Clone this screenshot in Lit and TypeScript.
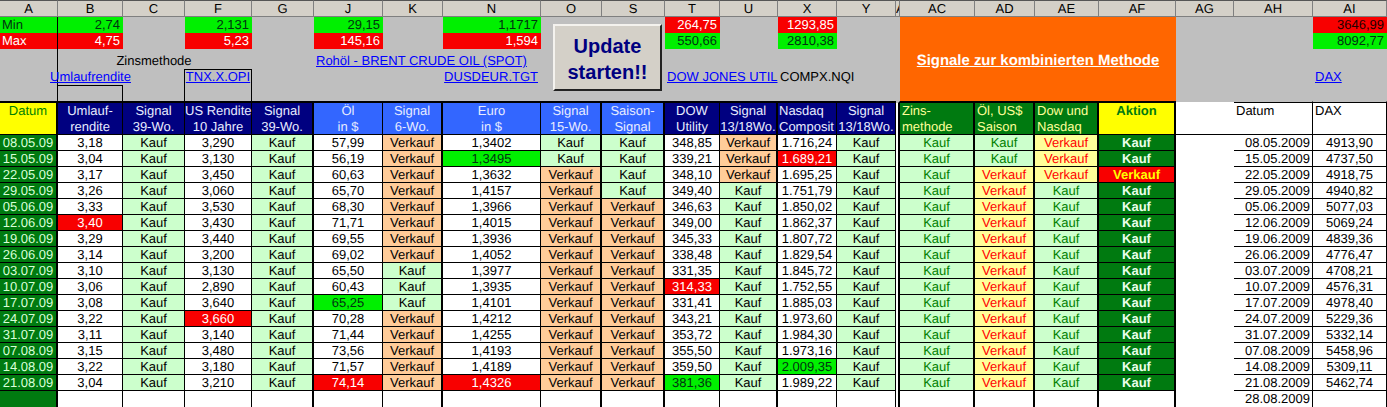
import { LitElement, html, css } from "lit";
import { customElement } from "lit/decorators.js";

const COLS: [string, number, boolean][] = [
  ["A", 58, true], ["B", 65, false], ["C", 62, false], ["F", 67, false], ["G", 62, true],
  ["J", 69, false], ["K", 60, true], ["N", 98, false], ["O", 61, true], ["S", 63, true],
  ["T", 55, false], ["U", 58, true], ["X", 59, false], ["Y", 59, false], ["A", 4, true],
  ["AC", 75, true], ["AD", 60, true], ["AE", 64, true], ["AF", 77, true], ["AG", 58, false],
  ["AH", 79, false], ["AI", 74, false],
];

type Head = [string, string, string];
const HEADS: Head[] = [
  ["h-date", "Datum", ""],
  ["h-navy", "Umlauf-", "rendite"], ["h-navy", "Signal", "39-Wo."], ["h-navy", "US Rendite", "10 Jahre"], ["h-navy", "Signal", "39-Wo."],
  ["h-blue", "Öl", "in $"], ["h-blue", "Signal", "6-Wo."], ["h-blue", "Euro", "in $"], ["h-blue", "Signal", "15-Wo."], ["h-blue", "Saison-", "Signal"],
  ["h-navy", "DOW", "Utility"], ["h-navy", "Signal", "13/18Wo."], ["h-navy left", "Nasdaq", "Composit"], ["h-navy", "Signal", "13/18Wo."],
  ["h-gap", "", ""],
  ["h-green", "Zins-", "methode"], ["h-green", "Öl, US$", "Saison"], ["h-green", "Dow und", "Nasdaq"],
  ["h-act", "Aktion", ""],
  ["h-plain", "", ""], ["h-plain rule", "Datum", ""], ["h-plain rule", "DAX", ""],
];

// date, B, F, J, K, N, O, S, T, U, X, AD, AE, AF, DAX
const ROWS: string[] = [
  "08.05.09 3,18 3,290 57,99 V 1,3402 K K 348,85 V 1.716,24 K V K 4913,90",
  "15.05.09 3,04 3,130 56,19 V 1,3495!g K K 339,21 V 1.689,21!r K V K 4737,50",
  "22.05.09 3,17 3,450 60,63 V 1,3632 V K 348,10 V 1.695,25 V V V 4918,75",
  "29.05.09 3,26 3,060 65,70 V 1,4157 V K 349,40 K 1.751,79 V K K 4940,82",
  "05.06.09 3,33 3,530 68,30 V 1,3966 V V 346,63 K 1.850,02 V K K 5077,03",
  "12.06.09 3,40!r 3,430 71,71 V 1,4015 V V 349,00 K 1.862,37 V K K 5069,24",
  "19.06.09 3,29 3,440 69,55 V 1,3936 V V 345,33 K 1.807,72 V K K 4839,36",
  "26.06.09 3,14 3,200 69,02 V 1,4052 V V 338,48 K 1.829,54 V K K 4776,47",
  "03.07.09 3,10 3,130 65,50 K 1,3977 V V 331,35 K 1.845,72 V K K 4708,21",
  "10.07.09 3,06 2,890 60,43 K 1,3935 V V 314,33!r K 1.752,55 V K K 4576,31",
  "17.07.09 3,08 3,640 65,25!g K 1,4101 V V 331,41 K 1.885,03 V K K 4978,40",
  "24.07.09 3,22 3,660!r 70,28 V 1,4212 V V 343,21 K 1.973,60 V K K 5229,36",
  "31.07.09 3,11 3,140 71,44 V 1,4255 V V 353,72 K 1.984,30 V K K 5332,14",
  "07.08.09 3,15 3,480 73,56 V 1,4193 V V 355,50 K 1.973,16 V K K 5458,96",
  "14.08.09 3,22 3,180 71,57 V 1,4189 V V 359,50 K 2.009,35!g V K K 5309,11",
  "21.08.09 3,04 3,210 74,14!r V 1,4326!r V V 381,36!g K 1.989,22 V K K 5462,74",
];

@customElement("app-root")
export class AppRoot extends LitElement {
  static styles = css`
    :host {
      display: block;
      position: relative;
      width: 1387px;
      height: 407px;
      overflow: hidden;
      background: #bfbfbf;
      font-family: "Liberation Sans", Arial, sans-serif;
      font-size: 13px;
      line-height: 16px;
      color: #000;
      text-rendering: geometricPrecision;
    }
    .sheet {
      display: grid;
      grid-template-rows: 17px 16px 16px 20px 16px 16px 17px 17px repeat(17, 16px);
    }
    .sheet > div { box-sizing: border-box; white-space: nowrap; min-width: 0; }
    .lbl {
      background: #d4d0c8;
      text-align: center;
      border-right: 1px solid #7f7f7f;
      border-bottom: 1px solid #7f7f7f;
      border-top: 1px solid #555;
      overflow: hidden;
      line-height: 15px;
    }
    .axis { border-right: 1px solid #000; }
    .mm { padding: 0 3px; text-align: right; }
    .mm.first { text-align: left; padding: 0 2px; border-right: 1px solid #000; }
    .txt { display: flex; align-items: flex-end; }
    .txt.c { justify-content: center; }
    .txt.r { justify-content: flex-end; padding-right: 3px; }
    .txt.l { padding-left: 2px; }
    a { color: #0000ff; text-decoration: underline; }
    .box-t { border-top: 1px solid #000; }
    .box-r { border-right: 1px solid #000; }
    .orange {
      background: #ff6600;
      display: flex;
      align-items: center;
      justify-content: center;
      padding-top: 3px;
      color: #fff;
      font-weight: 700;
      font-size: 14.9px;
      text-decoration: underline;
    }
    .head {
      text-align: center;
      border-top: 2px solid #000;
      border-right: 1px solid #000;
      border-bottom: 1px solid #000;
      color: #e8ecff;
    }
    .head.thick { border-right-width: 2px; }
    .head span { display: block; height: 16px; }
    .h-date { background: #ffff00; color: #008000; }
    .h-navy { background: #000080; }
    .h-blue { background: #3366ff; }
    .h-green { background: #007a10; color: #ffff99; text-align: left; padding-left: 2px; }
    .h-act { background: #ffff00; color: #007a10; font-weight: 700; }
    .h-gap { background: #fff; border-top-color: #bfbfbf; border-bottom: 0; }
    .left { text-align: left; padding-left: 1px; }
    .h-plain {
      background: #fff;
      color: #000;
      text-align: left;
      padding-left: 2px;
      border-top: 1px solid #bfbfbf;
      border-right: 0;
      padding-top: 1px;
    }
    .h-plain.rule { border-right: 1px solid #000; box-shadow: inset 0 1px 0 #000; }
    .cell {
      text-align: center;
      background: #fff;
      border-right: 1px solid #000;
      border-bottom: 1px solid #000;
    }
    .cell.thick { border-right-width: 2px; }
    .cell.end { border-bottom: 0; }
    .hi-g { background: #00f000; color: #031; }
    .hi-r { background: #f80000; color: #fff; }
    .hi-rd { background: #f80000; color: #200; }
    .date { background: #007a10; color: #d8ffd8; }
    .s-k { background: #ccffcc; }
    .s-v { background: #ffcc99; }
    .s-gk { background: #ccffcc; color: #008000; }
    .s-yv { background: #ffff99; color: #ff0000; }
    .a-k { background: #007a10; color: #eaffea; font-weight: 700; }
    .a-v { background: #f80000; color: #ffff00; font-weight: 700; }
    .gap { background: #fff; border-bottom: 0; }
    .none { border: 0; }
    .ah { text-align: right; padding-right: 2px; }
    .update {
      position: absolute;
      left: 553px;
      top: 24px;
      width: 109px;
      height: 67px;
      box-sizing: border-box;
      margin: 0;
      padding: 2px 0 0;
      background: #d4d0c8;
      border: 2px solid;
      border-color: #f4f2ee #222 #222 #f4f2ee;
      color: #000080;
      font: 700 20px/26px "Liberation Sans", Arial, sans-serif;
    }
  `;

  private pos(col: number, row: number, cs = 1, rs = 1) {
    return `grid-column:${col}/span ${cs};grid-row:${row}/span ${rs}`;
  }

  private dataCell(col: number, row: number, val: string, kind: string, end = false) {
    const thick = COLS[col - 1][2] ? " thick" : "";
    return html`<div class="cell${thick} ${kind}${end ? " end" : ""}" style=${this.pos(col, row)}>${val}</div>`;
  }

  private numCell(col: number, row: number, raw: string) {
    const [v, h] = raw.split("!");
    return this.dataCell(col, row, v, h === "g" ? "hi-g" : h === "r" ? "hi-r" : "");
  }

  private sig(col: number, row: number, s: string) {
    return this.dataCell(col, row, s === "K" ? "Kauf" : "Verkauf", s === "K" ? "s-k" : "s-v");
  }

  private sig2(col: number, row: number, s: string) {
    return this.dataCell(col, row, s === "K" ? "Kauf" : "Verkauf", s === "K" ? "s-gk" : "s-yv");
  }

  private renderRow(src: string, i: number) {
    const r = i + 9;
    const [d, b, f, j, k, n, o, s, t, u, x, ad, ae, af, dax] = src.split(" ");
    return html`
      ${this.dataCell(1, r, d, "date")}
      ${this.numCell(2, r, b)}${this.sig(3, r, "K")}
      ${this.numCell(4, r, f)}${this.sig(5, r, "K")}
      ${this.numCell(6, r, j)}${this.sig(7, r, k)}
      ${this.numCell(8, r, n)}${this.sig(9, r, o)}${this.sig(10, r, s)}
      ${this.numCell(11, r, t)}${this.sig(12, r, u)}
      ${this.numCell(13, r, x)}${this.sig(14, r, "K")}
      ${this.dataCell(15, r, "", "gap")}
      ${this.sig2(16, r, "K")}${this.sig2(17, r, ad)}${this.sig2(18, r, ae)}
      ${this.dataCell(19, r, af === "K" ? "Kauf" : "Verkauf", af === "K" ? "a-k" : "a-v")}
      ${this.dataCell(20, r, "", "none")}
      ${this.dataCell(21, r, d.slice(0, 6) + "20" + d.slice(6), "ah")}
      ${this.dataCell(22, r, dax, "")}
    `;
  }

  render() {
    const template = COLS.map((c) => `${c[1]}px`).join(" ");
    const mm = (col: number, row: number, v: string, k: string, extra = "") =>
      html`<div class="mm ${k} ${extra}" style=${this.pos(col, row)}>${v}</div>`;
    return html`
      <div class="sheet" style="grid-template-columns:${template}">
        ${COLS.map((c, i) => html`<div class="lbl" style=${this.pos(i + 1, 1)}>${c[0]}</div>`)}

        ${mm(1, 2, "Min", "hi-g", "first")}${mm(1, 3, "Max", "hi-r", "first")}
        <div class="axis" style=${this.pos(1, 4, 1, 3)}></div>
        ${mm(2, 2, "2,74", "hi-g")}${mm(2, 3, "4,75", "hi-r")}
        ${mm(4, 2, "2,131", "hi-g")}${mm(4, 3, "5,23", "hi-r")}
        ${mm(6, 2, "29,15", "hi-g")}${mm(6, 3, "145,16", "hi-r")}
        ${mm(8, 2, "1,1717", "hi-g")}${mm(8, 3, "1,594", "hi-r")}
        ${mm(11, 2, "264,75", "hi-r")}${mm(11, 3, "550,66", "hi-g")}
        ${mm(13, 2, "1293,85", "hi-r")}${mm(13, 3, "2810,38", "hi-g")}
        ${mm(22, 2, "3646,99", "hi-rd")}${mm(22, 3, "8092,77", "hi-g")}

        <div class="txt c" style=${this.pos(3, 4)}>Zinsmethode</div>
        <div class="txt l" style=${this.pos(6, 4)}><a>Rohöl - BRENT CRUDE OIL (SPOT)</a></div>
        <div class="txt c" style=${this.pos(2, 5)}><a>Umlaufrendite</a></div>
        <div class="box-r" style=${this.pos(3, 5, 1, 2)}></div>
        <div class="txt c box-t box-r" style=${this.pos(4, 5)}><a>TNX.X.OPI</a></div>
        <div class="box-r" style=${this.pos(4, 6)}></div>
        <div class="box-t box-r" style=${this.pos(2, 6)}></div>
        <div class="txt r" style=${this.pos(8, 5)}><a>DUSDEUR.TGT</a></div>
        <div class="txt l" style=${this.pos(11, 5)}><a>DOW JONES UTIL</a></div>
        <div class="txt l" style=${this.pos(13, 5)}>COMPX.NQI</div>
        <div class="txt l" style=${this.pos(22, 5)}><a>DAX</a></div>
        <div class="orange" style=${this.pos(16, 2, 4, 5)}>Signale zur kombinierten Methode</div>

        ${HEADS.map(
          (h, i) => html`<div
            class="head ${h[0]} ${COLS[i][2] ? "thick" : ""}"
            style=${this.pos(i + 1, 7, 1, 2)}
          ><span>${h[1]}</span><span>${h[2]}</span></div>`
        )}

        ${ROWS.map((r, i) => this.renderRow(r, i))}

        ${COLS.map((c, i) =>
          this.dataCell(
            i + 1,
            25,
            i === 20 ? "28.08.2009" : "",
            i === 0 ? "date" : i === 14 ? "gap" : i === 19 ? "none" : i === 20 ? "ah" : "",
            true
          )
        )}
      </div>
      <button class="update">Update<br />starten!!</button>
    `;
  }
}
